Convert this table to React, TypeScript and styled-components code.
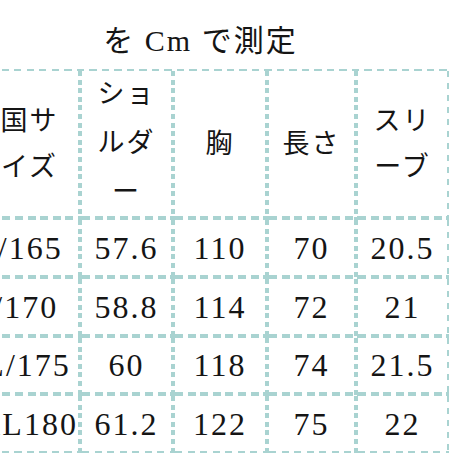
import React from "react";
import styled, { createGlobalStyle } from "styled-components";

const LINE = "#a9d3d1";

const Global = createGlobalStyle`
  html, body {
    margin: 0;
    padding: 0;
    background: #ffffff;
    overflow: hidden;
  }
  body {
    font-family: "Liberation Serif", "Noto Sans CJK JP", serif;
    color: #151515;
  }
`;

const Sheet = styled.div`
  width: 497px;
  margin-left: -48px;
  display: flex;
  flex-direction: column;
`;

const Title = styled.h1`
  margin: 0;
  padding: 23px 0 10px;
  font-size: 30px;
  font-weight: 400;
  line-height: 36px;
  letter-spacing: 2px;
  text-align: center;
`;

const Table = styled.div`
  display: grid;
  grid-template-columns: 130px 93px 94px 89px 91px;
  grid-template-rows: 149px 59px 59px 58px 57px;
  padding-top: 2px;
  background: repeating-linear-gradient(
      to right,
      ${LINE} 0 7px,
      transparent 7px 12.5px
    )
    left top / 100% 2px no-repeat;
`;

const vInner = `repeating-linear-gradient(to bottom, ${LINE} 0 5px, transparent 5px 8.6px)`;
const vOuter = `repeating-linear-gradient(to bottom, ${LINE} 0 6px, transparent 6px 12px)`;
const hInner = `repeating-linear-gradient(to right, ${LINE} 0 8px, transparent 8px 12.6px)`;
const hOuter = `repeating-linear-gradient(to right, ${LINE} 0 7px, transparent 7px 12.5px)`;

const Cell = styled.div<{ $lastCol?: boolean; $lastRow?: boolean }>`
  display: flex;
  align-items: center;
  justify-content: center;
  text-align: center;
  padding: 0 ${(p) => (p.$lastCol ? 2 : 4)}px ${(p) => (p.$lastRow ? 2 : 4)}px 0;
  background-image: ${(p) => (p.$lastCol ? vOuter : vInner)},
    ${(p) => (p.$lastRow ? hOuter : hInner)};
  background-size: ${(p) => (p.$lastCol ? 2 : 4)}px 100%,
    100% ${(p) => (p.$lastRow ? 2 : 4)}px;
  background-position: right top, left bottom;
  background-repeat: no-repeat;
`;

const HeadText = styled.div<{ $tall?: boolean }>`
  font-size: 27px;
  line-height: ${(p) => (p.$tall ? 49 : 46)}px;
  letter-spacing: 2px;
  white-space: nowrap;
`;

const ValueText = styled.div`
  font-size: 32px;
  line-height: 34px;
  letter-spacing: 2px;
  white-space: nowrap;
`;

const headers: string[][] = [
  ["中国サ", "\u3000イズ"],
  ["ショ", "ルダ", "ー"],
  ["胸"],
  ["長さ"],
  ["スリ", "ーブ"],
];

const rows: string[][] = [
  ["M/165", "57.6", "110", "70", "20.5"],
  ["L/170", "58.8", "114", "72", "21"],
  ["XL/175", "60", "118", "74", "21.5"],
  ["XXL180", "61.2", "122", "75", "22"],
];

export default function App() {
  const last = headers.length - 1;
  return (
    <>
      <Global />
      <Sheet>
        <Title>を Cm で測定</Title>
        <Table>
          {headers.map((lines, i) => (
            <Cell key={`h${i}`} $lastCol={i === last}>
              <HeadText $tall={lines.length > 2}>
                {lines.map((l, j) => (
                  <React.Fragment key={j}>
                    {j > 0 && <br />}
                    {l}
                  </React.Fragment>
                ))}
              </HeadText>
            </Cell>
          ))}
          {rows.map((row, r) =>
            row.map((v, c) => (
              <Cell
                key={`${r}-${c}`}
                $lastCol={c === last}
                $lastRow={r === rows.length - 1}
              >
                <ValueText>{v}</ValueText>
              </Cell>
            ))
          )}
        </Table>
      </Sheet>
    </>
  );
}
